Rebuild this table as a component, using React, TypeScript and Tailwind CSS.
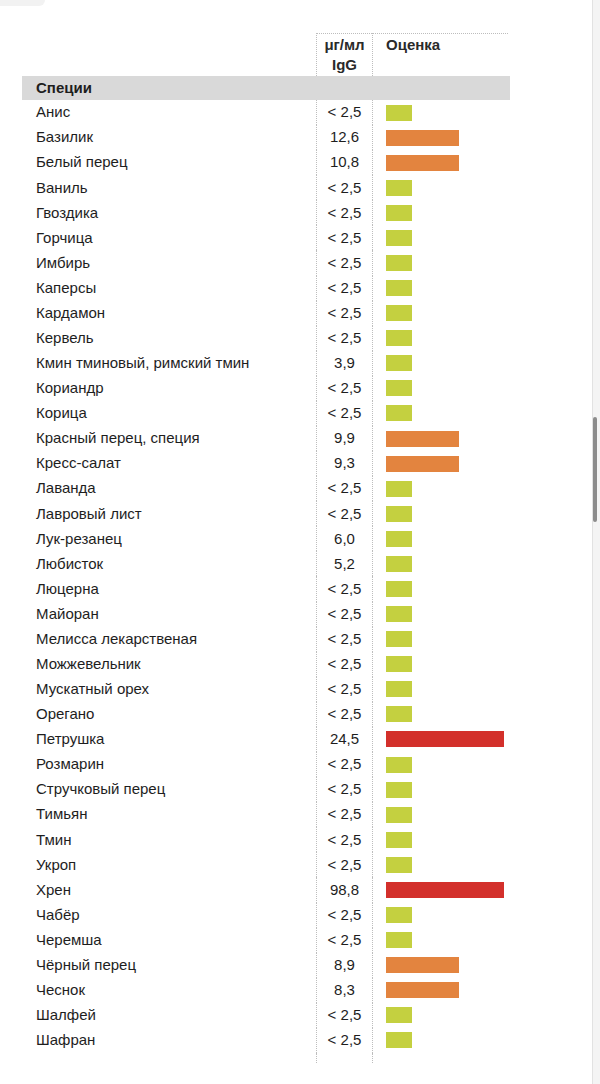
import React from "react";

type Level = "low" | "mid" | "high";

interface Row {
  name: string;
  value: string;
  level: Level;
}

const rows: Row[] = [
  { name: "Анис", value: "< 2,5", level: "low" },
  { name: "Базилик", value: "12,6", level: "mid" },
  { name: "Белый перец", value: "10,8", level: "mid" },
  { name: "Ваниль", value: "< 2,5", level: "low" },
  { name: "Гвоздика", value: "< 2,5", level: "low" },
  { name: "Горчица", value: "< 2,5", level: "low" },
  { name: "Имбирь", value: "< 2,5", level: "low" },
  { name: "Каперсы", value: "< 2,5", level: "low" },
  { name: "Кардамон", value: "< 2,5", level: "low" },
  { name: "Кервель", value: "< 2,5", level: "low" },
  { name: "Кмин тминовый, римский тмин", value: "3,9", level: "low" },
  { name: "Кориандр", value: "< 2,5", level: "low" },
  { name: "Корица", value: "< 2,5", level: "low" },
  { name: "Красный перец, специя", value: "9,9", level: "mid" },
  { name: "Кресс-салат", value: "9,3", level: "mid" },
  { name: "Лаванда", value: "< 2,5", level: "low" },
  { name: "Лавровый лист", value: "< 2,5", level: "low" },
  { name: "Лук-резанец", value: "6,0", level: "low" },
  { name: "Любисток", value: "5,2", level: "low" },
  { name: "Люцерна", value: "< 2,5", level: "low" },
  { name: "Майоран", value: "< 2,5", level: "low" },
  { name: "Мелисса лекарственая", value: "< 2,5", level: "low" },
  { name: "Можжевельник", value: "< 2,5", level: "low" },
  { name: "Мускатный орех", value: "< 2,5", level: "low" },
  { name: "Орегано", value: "< 2,5", level: "low" },
  { name: "Петрушка", value: "24,5", level: "high" },
  { name: "Розмарин", value: "< 2,5", level: "low" },
  { name: "Стручковый перец", value: "< 2,5", level: "low" },
  { name: "Тимьян", value: "< 2,5", level: "low" },
  { name: "Тмин", value: "< 2,5", level: "low" },
  { name: "Укроп", value: "< 2,5", level: "low" },
  { name: "Хрен", value: "98,8", level: "high" },
  { name: "Чабёр", value: "< 2,5", level: "low" },
  { name: "Черемша", value: "< 2,5", level: "low" },
  { name: "Чёрный перец", value: "8,9", level: "mid" },
  { name: "Чеснок", value: "8,3", level: "mid" },
  { name: "Шалфей", value: "< 2,5", level: "low" },
  { name: "Шафран", value: "< 2,5", level: "low" },
];

const barStyles: Record<Level, string> = {
  low: "w-[26px] bg-[#c4d040]",
  mid: "w-[73px] bg-[#e3843f]",
  high: "w-[118px] bg-[#d3302b]",
};

const ResultRow: React.FC<{ row: Row }> = ({ row }) => (
  <div className="grid grid-cols-[294px_56px_138px] h-[25.08px] items-center">
    <div className="pl-[14px] whitespace-nowrap">{row.name}</div>
    <div className="h-full flex items-center justify-center border-l border-dotted border-[#bdbdbd]">
      {row.value}
    </div>
    <div className="h-full flex items-center pl-[13px] border-l border-dotted border-[#bdbdbd]">
      <div className={`h-[16px] ${barStyles[row.level]}`} />
    </div>
  </div>
);

export default function App() {
  return (
    <div
      className="w-[600px] h-[1084px] bg-white flex text-[15px] text-[#1e1e1e] overflow-hidden"
      style={{ fontFamily: '"Liberation Sans", Arial, sans-serif' }}
    >
      <div className="flex-1 flex flex-col">
        <div className="w-[45px] h-[6px] rounded-br-[8px] bg-[#f2f2f2]" />

        <div className="pl-[22px] pt-[27px]">
          {/* header */}
          <div className="grid grid-cols-[294px_56px_136px] h-[43px]">
            <div />
            <div className="border-l border-t border-dotted border-[#bdbdbd] pt-[1px] text-center font-bold leading-[20px] text-[#2a2a2a]">
              μг/мл
              <br />
              IgG
            </div>
            <div className="border-l border-t border-dotted border-[#bdbdbd] pt-[1px] pl-[13px] font-bold leading-[20px] text-[#2a2a2a]">
              Оценка
            </div>
          </div>

          {/* section */}
          <div className="w-[488px] h-[24px] bg-[#d9d9d9] flex items-center pl-[14px] font-bold">
            Специи
          </div>

          {rows.map((row) => (
            <ResultRow key={row.name} row={row} />
          ))}

          <div className="grid grid-cols-[294px_56px_138px] h-[10px]">
            <div />
            <div className="border-l border-dotted border-[#bdbdbd]" />
            <div className="border-l border-dotted border-[#bdbdbd]" />
          </div>
        </div>
      </div>

      {/* scrollbar */}
      <div className="w-[8px] flex flex-col pt-[417px] bg-[#f4f4f4] border-l border-[#e2e2e2]">
        <div className="w-[4px] h-[105px] rounded-[2px] bg-[#8c8c8c]" />
      </div>
    </div>
  );
}
